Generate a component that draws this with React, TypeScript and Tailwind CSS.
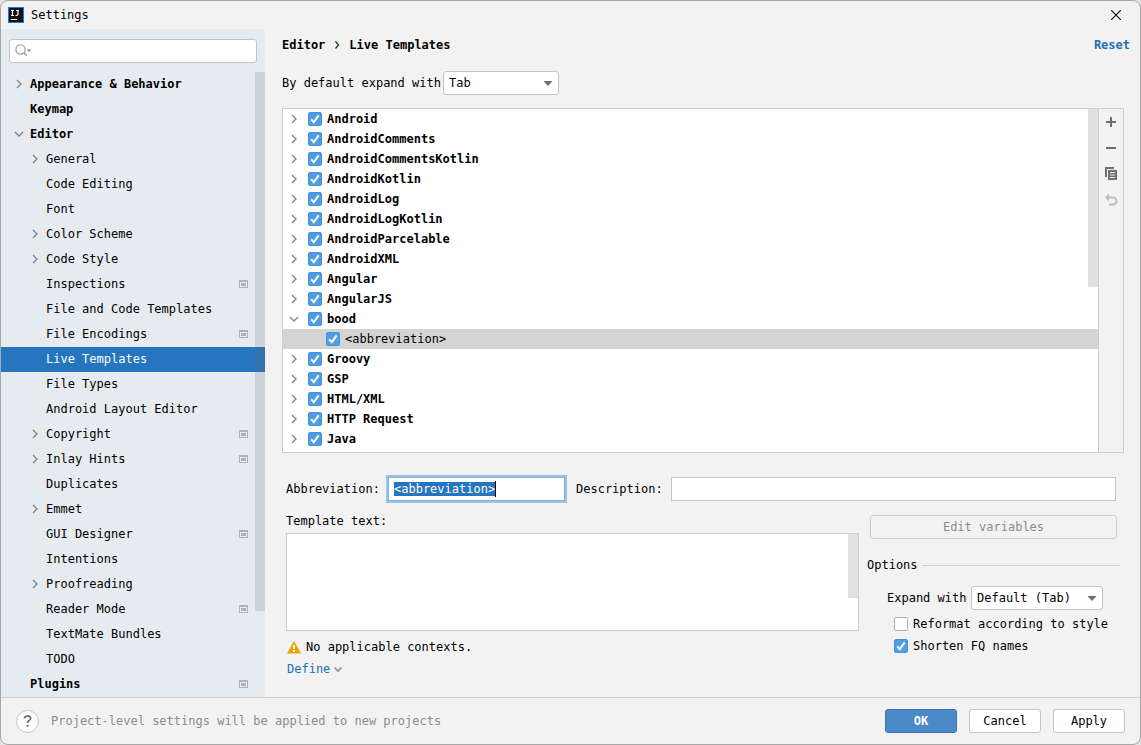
import { useEffect, useRef, useState } from "react";

type NavItem = { name: string; level: 0 | 1; arrow?: "right" | "down"; project?: boolean };

const navItems: NavItem[] = [
  { name: "Appearance & Behavior", level: 0, arrow: "right" },
  { name: "Keymap", level: 0 },
  { name: "Editor", level: 0, arrow: "down" },
  { name: "General", level: 1, arrow: "right" },
  { name: "Code Editing", level: 1 },
  { name: "Font", level: 1 },
  { name: "Color Scheme", level: 1, arrow: "right" },
  { name: "Code Style", level: 1, arrow: "right" },
  { name: "Inspections", level: 1, project: true },
  { name: "File and Code Templates", level: 1 },
  { name: "File Encodings", level: 1, project: true },
  { name: "Live Templates", level: 1 },
  { name: "File Types", level: 1 },
  { name: "Android Layout Editor", level: 1 },
  { name: "Copyright", level: 1, arrow: "right", project: true },
  { name: "Inlay Hints", level: 1, arrow: "right", project: true },
  { name: "Duplicates", level: 1 },
  { name: "Emmet", level: 1, arrow: "right" },
  { name: "GUI Designer", level: 1, project: true },
  { name: "Intentions", level: 1 },
  { name: "Proofreading", level: 1, arrow: "right" },
  { name: "Reader Mode", level: 1, project: true },
  { name: "TextMate Bundles", level: 1 },
  { name: "TODO", level: 1 },
  { name: "Plugins", level: 0, project: true },
];

const groups: { name: string; children?: string[] }[] = [
  { name: "Android" },
  { name: "AndroidComments" },
  { name: "AndroidCommentsKotlin" },
  { name: "AndroidKotlin" },
  { name: "AndroidLog" },
  { name: "AndroidLogKotlin" },
  { name: "AndroidParcelable" },
  { name: "AndroidXML" },
  { name: "Angular" },
  { name: "AngularJS" },
  { name: "bood", children: ["<abbreviation>"] },
  { name: "Groovy" },
  { name: "GSP" },
  { name: "HTML/XML" },
  { name: "HTTP Request" },
  { name: "Java" },
];

function Arrow({ dir }: { dir: "right" | "down" }) {
  return (
    <svg width="10" height="10" viewBox="0 0 10 10" fill="none" stroke="#7f8388" strokeWidth="1.3" aria-hidden="true">
      {dir === "right" ? <path d="M3 1l4 4-4 4" /> : <path d="M1 3l4 4 4-4" />}
    </svg>
  );
}

function ProjectIcon() {
  return (
    <svg width="9" height="8" viewBox="0 0 9 8" aria-hidden="true">
      <path d="M0 0h9v8H0zM1 2v5h7V2z" fill="#a9b4bc" fillRule="evenodd" />
      <path d="M2 3h5v3H2z" fill="#a9b4bc" />
    </svg>
  );
}

function Checkbox({ label, checked, bold }: { label: string; checked?: boolean; bold?: boolean }) {
  return (
    <label className={`flex items-center gap-[5px] ${bold ? "font-bold" : ""}`}>
      <span className="relative block size-[14px]">
        <input
          type="checkbox"
          defaultChecked={checked}
          className="peer block size-[14px] appearance-none rounded-[2px] border border-[#b0b0b0] bg-white checked:border-[#4693dd] checked:bg-[#4f9ee3]"
        />
        <svg
          className="pointer-events-none absolute inset-0 hidden peer-checked:block"
          width="14"
          height="14"
          viewBox="0 0 14 14"
          fill="none"
          stroke="#fff"
          strokeWidth="2"
        >
          <path d="M3.2 7.4l2.6 2.7 4.9-6.7" />
        </svg>
      </span>
      {label}
    </label>
  );
}

function Select({ id, options, className }: { id: string; options: string[]; className: string }) {
  return (
    <span className={`relative block ${className}`}>
      <select
        id={id}
        className="block h-6 w-full appearance-none rounded-[3px] border border-[#c4c4c4] bg-white pl-[5px] pr-6 text-[12px]"
      >
        {options.map((o) => (
          <option key={o}>{o}</option>
        ))}
      </select>
      <svg className="pointer-events-none absolute right-[6px] top-[10px]" width="10" height="5" viewBox="0 0 10 5">
        <path d="M0.5 0h9L5 5z" fill="#6e6e6e" />
      </svg>
    </span>
  );
}

function Sidebar() {
  const [selected, setSelected] = useState("Live Templates");

  return (
    <aside className="flex w-[264px] shrink-0 flex-col bg-[#e6ebf0]">
      <div className="relative px-2 pb-[9px] pt-[10px]">
        <input
          type="text"
          aria-label="Search settings"
          className="block h-6 w-full rounded-[3px] border border-[#c4c4c4] bg-white pl-7 pr-2 text-[12px] outline-none"
        />
        <svg className="pointer-events-none absolute left-[14px] top-[15px]" width="17" height="13" viewBox="0 0 17 13" fill="none">
          <circle cx="5.5" cy="5.5" r="4.6" stroke="#9aa0a6" strokeWidth="1.3" />
          <path d="M8.8 8.8l3 3" stroke="#9aa0a6" strokeWidth="1.6" />
          <path d="M11.5 5.5h5L14 8z" fill="#8a8f94" />
        </svg>
      </div>
      <nav className="relative">
        <ul>
          {navItems.map((item) => {
            const active = item.name === selected;
            return (
              <li key={item.name}>
                <button
                  type="button"
                  onClick={() => setSelected(item.name)}
                  className={`flex h-[25px] w-full items-center gap-[6px] pb-[2px] pr-[17px] text-left ${
                    item.level === 0 ? "pl-[13px] font-bold" : "pl-[29px]"
                  } ${active ? "bg-[#2675bf] text-white" : ""}`}
                >
                  <span className="w-[10px] shrink-0">{item.arrow && <Arrow dir={item.arrow} />}</span>
                  <span className="flex-1 whitespace-nowrap">{item.name}</span>
                  {item.project && <ProjectIcon />}
                </button>
              </li>
            );
          })}
        </ul>
        <div className="pointer-events-none absolute right-0 top-0 h-[539px] w-[10px] bg-[#6e6973]/20" />
      </nav>
    </aside>
  );
}

function TemplateTree() {
  return (
    <div className="mt-[13px] flex flex-1 border border-[#cdcdcd]">
      <div className="relative flex-1 bg-white">
        <ul>
          {groups.map((group) => (
            <li key={group.name}>
              <div className="flex h-5 items-center gap-[9px] pl-[6px]">
                <button type="button" aria-label={`Toggle ${group.name}`}>
                  <Arrow dir={group.children ? "down" : "right"} />
                </button>
                <Checkbox label={group.name} checked bold />
              </div>
              {group.children?.map((child) => (
                <div key={child} className="flex h-5 items-center bg-[#d4d4d4] pl-[43px]">
                  <Checkbox label={child} checked />
                </div>
              ))}
            </li>
          ))}
        </ul>
        <div className="pointer-events-none absolute right-0 top-0 h-[178px] w-[10px] bg-black/12" />
      </div>
      <div className="flex w-[25px] flex-col items-center gap-[10px] border-l border-[#cdcdcd] pt-[5px]">
        <button type="button" aria-label="Add">
          <svg width="16" height="16" viewBox="0 0 16 16">
            <path d="M7 3h2v4h4v2H9v4H7V9H3V7h4z" fill="#6e6e6e" />
          </svg>
        </button>
        <button type="button" aria-label="Remove">
          <svg width="16" height="16" viewBox="0 0 16 16">
            <path d="M3 7h10v2H3z" fill="#6e6e6e" />
          </svg>
        </button>
        <button type="button" aria-label="Duplicate">
          <svg width="16" height="16" viewBox="0 0 16 16" fill="#6e6e6e">
            <path d="M2 1h9v2H4v8H2z" />
            <path d="M5 4h9v10H5zM7 6v1h5V6zM7 8.500v1h5v-1zM7 11v1h5v-1z" fillRule="evenodd" />
          </svg>
        </button>
        <button type="button" aria-label="Restore defaults" disabled>
          <svg width="16" height="16" viewBox="0 0 16 16" fill="none">
            <path d="M5 5.500h5a3.500 3.500 0 0 1 0 7H6" stroke="#bdbdbd" strokeWidth="2" />
            <path d="M2 5.500l4-4v8z" fill="#bdbdbd" />
          </svg>
        </button>
      </div>
    </div>
  );
}

function TemplateForm() {
  const abbreviation = useRef<HTMLInputElement>(null);

  useEffect(() => {
    abbreviation.current?.focus();
    abbreviation.current?.select();
  }, []);

  return (
    <div className="mt-6 pb-5 pl-1 pr-2">
      <div className="flex items-center">
        <label htmlFor="abbreviation" className="w-[102px]">Abbreviation:</label>
        <div className="relative w-[177px]">
          <input
            id="abbreviation"
            ref={abbreviation}
            type="text"
            defaultValue="<abbreviation>"
            className="block h-6 w-full border border-[#87afda] bg-white px-[5px] text-[12px] outline-2 outline-[#97c3f3] selection:bg-[#2675bf] selection:text-white"
          />
          <span className="pointer-events-none absolute left-[calc(14ch+6px)] top-1 h-4 w-px bg-black" />
        </div>
        <label htmlFor="description" className="ml-[11px] w-[95px]">Description:</label>
        <input id="description" type="text" className="h-6 min-w-0 flex-1 border border-[#c4c4c4] bg-white px-[5px] text-[12px] outline-none" />
      </div>

      <div className="mt-3 flex">
        <div className="flex-1">
          <label htmlFor="template" className="block h-5">Template text:</label>
          <div className="relative">
            <textarea id="template" className="block h-[98px] w-full resize-none border border-[#cdcdcd] bg-white p-1 text-[12px] outline-none" />
            <div className="pointer-events-none absolute right-px top-px h-16 w-[10px] bg-[#e1e1e1]" />
          </div>
          <p className="mt-2 flex h-4 items-center gap-[5px] pl-px">
            <svg width="14" height="13" viewBox="0 0 14 13" aria-hidden="true">
              <path d="M7 0l7 12.500H0z" fill="#eda200" />
              <path d="M6 4h2v4H6zM6 9h2v2H6z" fill="#fff" />
            </svg>
            No applicable contexts.
          </p>
          <a href="#define" className="mt-[6px] flex h-4 items-center gap-[3px] pl-px text-[#2470b3]">
            Define
            <svg width="10" height="10" viewBox="0 0 10 10" fill="none" stroke="#8c9196" strokeWidth="1.6" aria-hidden="true">
              <path d="M1.500 3.500L5 7l3.500-3.500" />
            </svg>
          </a>
        </div>

        <div className="w-[257px] pl-2 pt-[2px]">
          <div className="-mr-px pl-[3px]">
            <button type="button" disabled className="block h-6 w-full rounded-[3px] border border-[#cfcfcf] text-[#8c8c8c]">
              Edit variables
            </button>
          </div>
          <div role="group" aria-labelledby="options-title">
            <div className="-mr-1 mt-[18px] flex h-4 items-center gap-1">
              <h2 id="options-title">Options</h2>
              <span className="h-px flex-1 bg-[#d1d1d1]" />
            </div>
            <div className="mt-[13px] flex items-center pl-5">
              <label htmlFor="expand" className="w-[84px]">Expand with</label>
              <Select id="expand" options={["Default (Tab)", "Tab", "Enter", "Space", "None"]} className="w-[132px]" />
            </div>
            <div className="mt-[6px] flex flex-col gap-[6px] whitespace-nowrap pl-[27px]">
              <Checkbox label="Reformat according to style" />
              <Checkbox label="Shorten FQ names" checked />
            </div>
          </div>
        </div>
      </div>
    </div>
  );
}

export default function App() {
  return (
    <div className="min-h-screen bg-[#e4e4e4]">
      <div className="flex min-h-screen flex-col overflow-hidden rounded-lg border border-[#a8a8a8] bg-[#f2f2f2] font-['DejaVu_Sans_Mono',monospace] text-[12px] leading-4 text-black">
        <header className="flex h-7 items-center gap-[7px] pl-[7px] pr-[19px]">
          <svg width="16" height="16" viewBox="0 0 16 16" aria-hidden="true">
            <rect width="16" height="16" fill="#087cfa" />
            <rect x="1" y="1" width="14" height="14" fill="#111" />
            <path d="M3 3.500h3M4.500 3.500v5M3 8.500h3M8 3.500h3M10 3.500v3.500q0 1.500-1.500 1.500H7.500M3 12.500h6" stroke="#fff" strokeWidth="1.200" fill="none" />
          </svg>
          <h1>Settings</h1>
          <button type="button" aria-label="Close" className="ml-auto">
            <svg width="10" height="10" viewBox="0 0 10 10" stroke="#111" strokeWidth="1.200">
              <path d="M0 0l10 10M10 0L0 10" />
            </svg>
          </button>
        </header>

        <div className="flex flex-1">
          <Sidebar />
          <main className="flex min-w-0 flex-1 flex-col pl-[17px] pr-4">
            <div className="-mr-[6px] mt-2 flex h-4 items-center font-bold">
              <span>Editor</span>
              <svg className="mx-[9px]" width="6" height="8" viewBox="0 0 6 8" fill="none" stroke="#222" strokeWidth="1.200" aria-hidden="true">
                <path d="M1.500 0.500L4.500 4l-3 3.500" />
              </svg>
              <span>Live Templates</span>
              <a href="#reset" className="ml-auto text-[#2470b3]">Reset</a>
            </div>
            <div className="mt-[18px] flex items-center">
              <label htmlFor="default-expand" className="w-[161px] whitespace-nowrap">By default expand with</label>
              <Select id="default-expand" options={["Tab", "Enter", "Space", "None"]} className="w-[116px]" />
            </div>
            <TemplateTree />
            <TemplateForm />
          </main>
        </div>

        <footer className="flex h-[47px] items-center border-t border-[#cdcdcd] pl-[15px] pr-[15px]">
          <button type="button" aria-label="Help" className="flex size-[23px] items-center justify-center rounded-full border border-[#c4c4c4] bg-white">
            <svg width="9" height="12" viewBox="0 0 9 12" fill="none" stroke="#6e6e6e" strokeWidth="1.800">
              <path d="M1.400 3.600C1.400 0.200 7.600 0.200 7.600 3.400C7.600 5.400 4.500 5.400 4.500 8M4.500 9.800v1.900" />
            </svg>
          </button>
          <p className="ml-3 text-[#8c8c8c]">Project-level settings will be applied to new projects</p>
          <div className="ml-auto flex gap-3">
            <button type="button" className="h-6 w-[72px] rounded-[3px] border border-[#3d75b2] bg-[#4b89c9] font-bold text-white">OK</button>
            <button type="button" className="h-6 w-[72px] rounded-[3px] border border-[#c4c4c4] bg-white">Cancel</button>
            <button type="button" className="h-6 w-[72px] rounded-[3px] border border-[#c4c4c4] bg-white">Apply</button>
          </div>
        </footer>
      </div>
    </div>
  );
}
